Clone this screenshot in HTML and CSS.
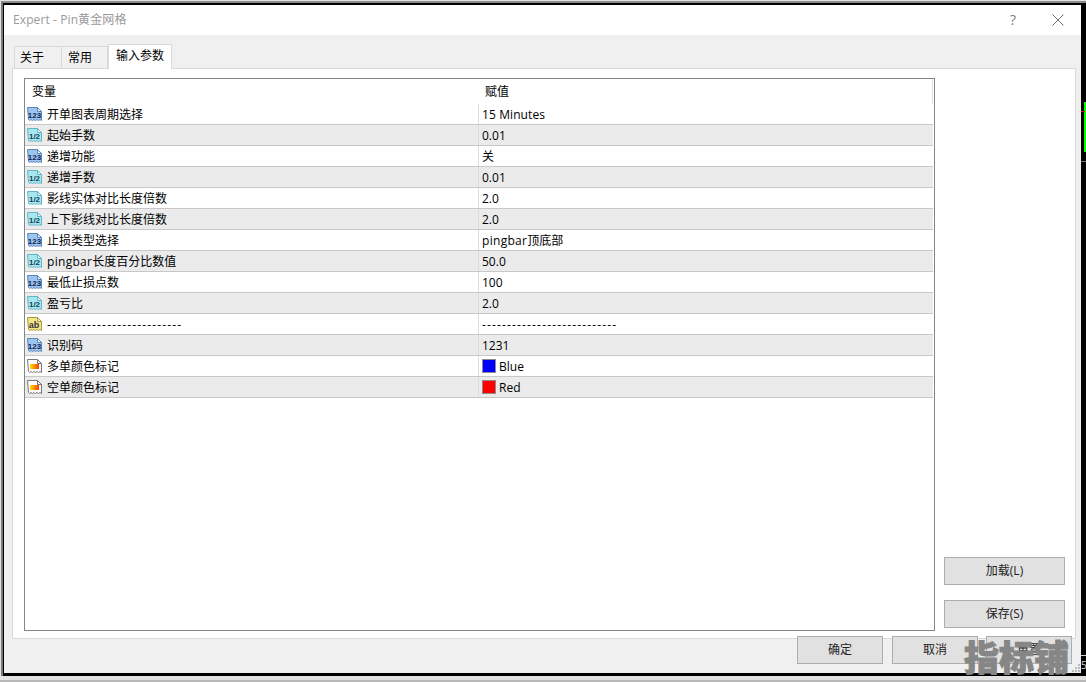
FILE: index.html
```html
<!DOCTYPE html>
<html lang="zh">
<head>
<meta charset="utf-8">
<title>Expert - Pin黄金网格</title>
<link rel="stylesheet" href="styles.css">
</head>
<body>
<svg class="defs" width="0" height="0">
  <defs>
    <linearGradient id="flame" x1="0" x2="1" y1="0" y2="0">
      <stop offset="0" stop-color="#ffe000"/>
      <stop offset="1" stop-color="#ff3c00"/>
    </linearGradient>
    <symbol id="doc" viewBox="0 0 16 16">
      <path d="M.5 1.5h10l4 4v9l-1.5-1-1.5 1-1.5-1-1.5 1-1.5-1-1.5 1-1.5-1-1.5 1-1-1z"/>
      <path class="fold" d="M10.5 1.5v4h4z"/>
    </symbol>
  </defs>
</svg>
<div class="stage">
  <div class="window">
    <header class="titlebar">
      <span class="title">Expert - Pin黄金网格</span>
      <span class="help">?</span>
      <svg class="close" width="12" height="12" viewBox="0 0 12 12"><path d="M.5.5l11 11M11.5.5l-11 11"/></svg>
    </header>
    <div class="body">
      <nav class="tabs">
        <span class="tab">关于</span>
        <span class="tab">常用</span>
        <span class="tab active">输入参数</span>
      </nav>
      <section class="panel">
        <div class="list">
          <div class="head"><span class="hname">变量</span><span class="hval">赋值</span><i class="hend"></i></div>
          <div class="row"><span class="name"><svg class="ico int" viewBox="0 0 16 16"><use href="#doc"/><text x="7.5" y="12">123</text></svg>开单图表周期选择</span><span class="val"><span class="lat2">15 Minutes</span></span></div>
          <div class="row alt"><span class="name"><svg class="ico dbl" viewBox="0 0 16 16"><use href="#doc"/><text x="7.5" y="11.5">1/2</text></svg>起始手数</span><span class="val">0.01</span></div>
          <div class="row"><span class="name"><svg class="ico int" viewBox="0 0 16 16"><use href="#doc"/><text x="7.5" y="12">123</text></svg>递增功能</span><span class="val">关</span></div>
          <div class="row alt"><span class="name"><svg class="ico dbl" viewBox="0 0 16 16"><use href="#doc"/><text x="7.5" y="11.5">1/2</text></svg>递增手数</span><span class="val">0.01</span></div>
          <div class="row"><span class="name"><svg class="ico dbl" viewBox="0 0 16 16"><use href="#doc"/><text x="7.5" y="11.5">1/2</text></svg>影线实体对比长度倍数</span><span class="val">2.0</span></div>
          <div class="row alt"><span class="name"><svg class="ico dbl" viewBox="0 0 16 16"><use href="#doc"/><text x="7.5" y="11.5">1/2</text></svg>上下影线对比长度倍数</span><span class="val">2.0</span></div>
          <div class="row"><span class="name"><svg class="ico int" viewBox="0 0 16 16"><use href="#doc"/><text x="7.5" y="12">123</text></svg>止损类型选择</span><span class="val"><span class="lat">pingbar</span>顶底部</span></div>
          <div class="row alt"><span class="name"><svg class="ico dbl" viewBox="0 0 16 16"><use href="#doc"/><text x="7.5" y="11.5">1/2</text></svg><span class="lat">pingbar</span>长度百分比数值</span><span class="val">50.0</span></div>
          <div class="row"><span class="name"><svg class="ico int" viewBox="0 0 16 16"><use href="#doc"/><text x="7.5" y="12">123</text></svg>最低止损点数</span><span class="val">100</span></div>
          <div class="row alt"><span class="name"><svg class="ico dbl" viewBox="0 0 16 16"><use href="#doc"/><text x="7.5" y="11.5">1/2</text></svg>盈亏比</span><span class="val">2.0</span></div>
          <div class="row"><span class="name"><svg class="ico str" viewBox="0 0 16 16"><use href="#doc"/><text x="7" y="12">ab</text></svg><span class="dash">---------------------------</span></span><span class="val"><span class="dash">---------------------------</span></span></div>
          <div class="row alt"><span class="name"><svg class="ico int" viewBox="0 0 16 16"><use href="#doc"/><text x="7.5" y="12">123</text></svg>识别码</span><span class="val">1231</span></div>
          <div class="row"><span class="name"><svg class="ico col" viewBox="0 0 16 16"><use href="#doc"/><rect class="c1" x="3" y="6" width="9" height="5"/></svg>多单颜色标记</span><span class="val"><i class="swatch blue"></i>Blue</span></div>
          <div class="row alt"><span class="name"><svg class="ico col" viewBox="0 0 16 16"><use href="#doc"/><rect class="c1" x="3" y="6" width="9" height="5"/></svg>空单颜色标记</span><span class="val"><i class="swatch red"></i>Red</span></div>
        </div>
        <aside class="side">
          <button class="btn side-btn">加载(L)</button>
          <button class="btn side-btn">保存(S)</button>
        </aside>
      </section>
      <footer class="actions">
        <button class="btn act">确定</button>
        <button class="btn act">取消</button>
        <button class="btn act">重置</button>
      </footer>
    </div>
  </div>
  <div class="behind">
    <span class="candle"></span>
    <span class="rule"></span>
    <span class="rule low"></span>
    <span class="tick-label">5</span>
  </div>
</div>
<span class="red-tick"></span>
<svg class="grip" width="8" height="8" viewBox="0 0 8 8"><path d="M6 0h2v2H6zM3 3h2v2H3zM6 3h2v2H6zM0 6h2v2H0zM3 6h2v2H3zM6 6h2v2H6z"/></svg>
<div class="watermark">指标铺</div>
</body>
</html>
```
FILE: styles.css
```css
* { box-sizing: border-box; }
html, body { margin: 0; height: 100%; }
body {
  width: 1086px;
  height: 682px;
  overflow: hidden;
  position: relative;
  background: #e2e2e2;
  border-bottom: 2px solid #b8b8b8;
  font: 12px/16px "Open Sans", "Noto Sans CJK SC", sans-serif;
  color: #000;
}
.defs { position: absolute; }
.stage {
  display: flex;
  height: 675px;
  margin: 1px 0 0 1px;
  background: #000;
  border-top: 2px solid #8c8c8c;
  border-left: 2px solid #7a7a7a;
  padding: 2px 0 3px 1px;
}
.window {
  width: 1077px;
  flex: none;
  display: flex;
  flex-direction: column;
}
.behind {
  flex: 1;
  min-width: 0;
  padding-top: 97px;
  display: flex;
  flex-direction: column;
  align-items: flex-end;
  overflow: hidden;
}
.candle {
  width: 2px;
  height: 50px;
  flex: none;
  border: 1px solid #00ff00;
  border-left-width: 2px;
  border-right: 0;
}
.rule {
  width: 100%;
  height: 1px;
  flex: none;
  margin-top: 9px;
  background: #6b7280;
}
.rule.low { margin-top: 493px; background: #cfcfcf; }
.tick-label {
  width: 100%;
  font-size: 10px;
  line-height: 14px;
  margin-top: 2px;
  color: #d8d8d8;
}
.red-tick {
  position: absolute;
  left: 1081px;
  top: 111px;
  width: 4px;
  height: 1px;
  background: #e01010;
}
.grip {
  position: absolute;
  left: 1072px;
  top: 664px;
  fill: #b9b9b9;
}
.titlebar {
  height: 30px;
  flex: none;
  background: #fff;
  display: flex;
  align-items: center;
  padding: 0 17px 0 9px;
  color: #9a9a9a;
}
.title { flex: 1; letter-spacing: .1px; }
.help { margin-right: 36px; font-size: 14px; color: #808080; }
.close path { stroke: #707070; stroke-width: 1; fill: none; }
.body {
  flex: 1;
  background: #f0f0f0;
  display: flex;
  flex-direction: column;
  padding: 9px 5px 0 8px;
}
.tabs { display: flex; height: 24px; padding-left: 2px; position: relative; z-index: 1; }
.tab {
  width: 46px;
  margin-top: 2px;
  height: 22px;
  border: 1px solid #d9d9d9;
  border-bottom: 0;
  border-left: 0;
  padding: 3px 0 0 6px;
}
.tab:first-child { width: 48px; border-left: 1px solid #d9d9d9; padding-left: 5px; }
.tab.active {
  width: 64px;
  margin-top: 0;
  height: 25px;
  background: #fff;
  border: 1px solid #d9d9d9;
  border-bottom: 0;
  padding: 3px 0 0 7px;
}
.panel {
  height: 571px;
  background: #fff;
  border: 1px solid #d9d9d9;
  display: flex;
  padding: 9px 10px 7px 11px;
  gap: 9px;
}
.list {
  width: 911px;
  border: 1px solid #82878c;
  display: flex;
  flex-direction: column;
}
.head {
  height: 25px;
  display: flex;
  flex: none;
}
.hname { width: 453px; padding: 5px 0 0 7px; }
.hval { width: 454px; padding: 5px 0 0 7px; }
.hend { width: 1px; background: #e0e0e0; }
.row {
  height: 21px;
  flex: none;
  display: flex;
  align-items: center;
  width: 908px;
  border-bottom: 1px solid #c8c8c8;
}
.row.alt { background: #ebebeb; }
.name {
  width: 454px;
  height: 100%;
  display: flex;
  align-items: center;
  border-right: 1px solid #dcdcdc;
  padding: 2px 0 0 2px;
}
.val { flex: 1; height: 100%; padding: 2px 0 0 3px; display: flex; align-items: center; }
.lat { letter-spacing: .3px; }
.lat2 { letter-spacing: .1px; }
.dash { letter-spacing: 1.15px; }
.ico { width: 16px; height: 16px; margin: -2px 4px 0 0; flex: none; }
.ico text { font: bold 8px "Liberation Sans", sans-serif; text-anchor: middle; stroke: none; }
.ico.int { fill: #9cc4ec; stroke: #5b87b8; }
.ico.int text { fill: #0c2458; }
.ico.dbl { fill: #aae6ee; stroke: #5fb8c8; }
.ico.dbl text { fill: #0f4058; }
.ico.str { fill: #f2e58e; stroke: #a89a3c; }
.ico.str text { fill: #333; font-size: 9px; }
.ico.col { fill: #fff; stroke: #777; }
.ico .c1 { fill: url(#flame); stroke: none; }
.fold { fill: #eef6fb; }
.swatch {
  width: 14px;
  height: 14px;
  margin: -2px 3px 0 0;
  border: 1px solid #8c8c8c;
  flex: none;
}
.swatch.blue { background: #0000ff; }
.swatch.red { background: #ff0000; }
.side {
  flex: 1;
  display: flex;
  flex-direction: column;
  justify-content: flex-end;
  gap: 15px;
  padding-bottom: 3px;
}
.btn {
  height: 28px;
  background: #e1e1e1;
  border: 1px solid #adadad;
  font: 12px/16px "Open Sans", "Noto Sans CJK SC", sans-serif;
  color: #222;
  padding: 0;
}
.actions {
  display: flex;
  justify-content: flex-end;
  gap: 9px;
  margin-top: -3px;
  padding-right: 4px;
  position: relative;
}
.act { width: 86px; }
.act:last-child { margin-left: -1px; }
.watermark {
  position: absolute;
  left: 964px;
  top: 635px;
  font: 900 35px/42px "Noto Sans CJK SC", sans-serif;
  color: #868686;
  -webkit-text-stroke: 1px #868686;
}
```
